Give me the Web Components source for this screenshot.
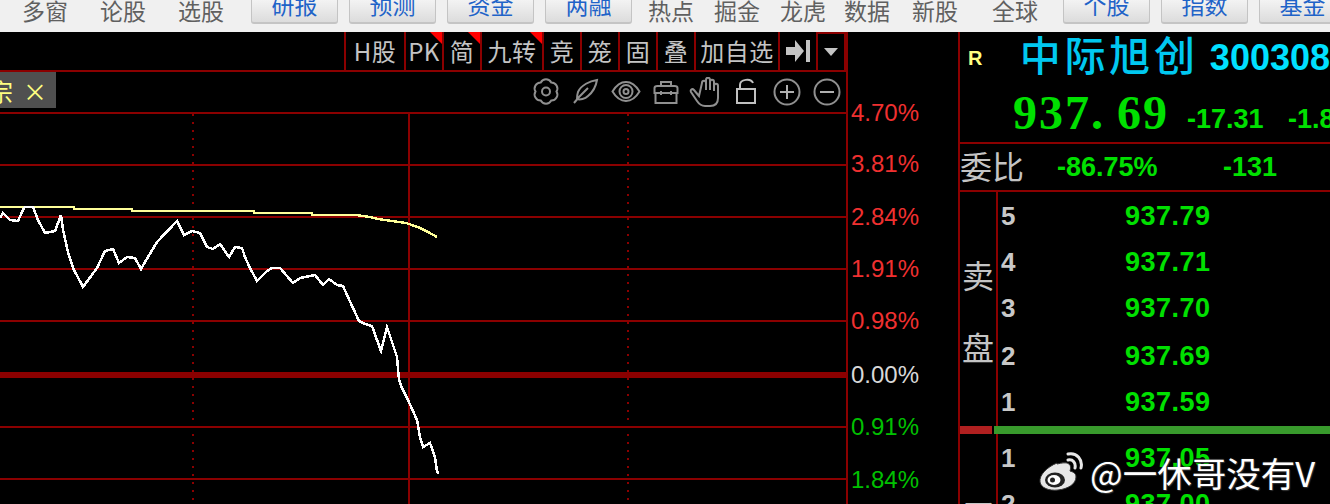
<!DOCTYPE html>
<html><head><meta charset="utf-8">
<style>
html,body{margin:0;padding:0;background:#000;width:1330px;height:504px;overflow:hidden;font-family:"Noto Sans CJK SC","Liberation Sans",sans-serif}
app-shell{width:1330px;height:504px}
</style></head><body>
<app-shell>
  <top-nav slot="nav">
    <nav-link w="78" ml="22">多窗</nav-link><nav-link w="78">论股</nav-link><nav-link w="73">选股</nav-link>
    <nav-btn>研报</nav-btn><nav-btn>预测</nav-btn><nav-btn>资金</nav-btn><nav-btn>两融</nav-btn>
    <nav-link w="66" ml="5">热点</nav-link><nav-link w="66">掘金</nav-link><nav-link w="64">龙虎</nav-link><nav-link w="68">数据</nav-link><nav-link w="80">新股</nav-link><nav-link w="71">全球</nav-link>
    <nav-btn>个股</nav-btn><nav-btn>指数</nav-btn><nav-btn>基金</nav-btn>
  </top-nav>
  <chart-panel slot="chart"></chart-panel>
  <quote-panel slot="quote"></quote-panel>
</app-shell>
<script>
const def=(n,html,init)=>customElements.define(n,class extends HTMLElement{connectedCallback(){if(this.shadowRoot)return;const s=this.attachShadow({mode:'open'});s.innerHTML=html;init&&init.call(this,s)}});
const RED='#8b0000';
def('app-shell',`<style>:host{display:grid;grid-template-columns:958px 372px;grid-template-rows:32px 472px}
::slotted([slot=nav]){grid-column:1/3}</style><slot name="nav"></slot><slot name="chart"></slot><slot name="quote"></slot>`);
def('top-nav',`<style>:host{display:flex;height:32px;background:#f0f0f0;overflow:hidden;align-items:flex-start;gap:0;font:23px/32px "Noto Sans CJK SC",sans-serif}</style><slot></slot>`);
def('nav-link',`<style>:host{display:block;flex:none;color:#606060;font-size:23px;line-height:24px;height:24px;margin-top:-2px;white-space:nowrap}</style><slot></slot>`,function(){this.style.width=this.getAttribute('w')+'px';if(this.getAttribute('ml'))this.style.marginLeft=this.getAttribute('ml')+'px'});
def('nav-btn',`<style>:host{display:block;flex:none;box-sizing:border-box;width:87px;height:25px;margin:-1px 11px 0 0;background:linear-gradient(#f4f4f4,#dcdcdc);border:1px solid #c4c4c4;border-bottom-width:2px;border-top:0;border-radius:0 0 3px 3px;color:#1f63c8;font-size:23px;line-height:24px;text-align:center;overflow:hidden}
div{margin-top:-7px}</style><div><slot></slot></div>`);

def('tool-cell',`<style>:host{position:relative;display:flex;align-items:center;justify-content:center;box-sizing:border-box;height:100%;flex:none;border-left:2px solid ${RED};color:#c4c4c4;font-size:24px;white-space:nowrap;letter-spacing:.5px;line-height:38px}
:host([mark])::after{content:"";position:absolute;right:-1px;top:0;border-top:13px solid #f00;border-left:13px solid transparent}</style><slot></slot>`,function(){this.style.width=this.getAttribute('w')+'px'});

const ico=(w,inner,c)=>`<svg width="${w}" height="30" viewBox="0 0 ${w} 30" fill="none" stroke="${c||'#909090'}" stroke-width="2">${inner}</svg>`;
def('chart-icons',`<style>:host{display:flex;align-items:center;justify-content:flex-end;gap:0;height:40px;margin-right:-1px}svg{display:block;flex:none}</style>
${ico(40,`<path d="M30.500 14.500A6 6 0 0 1 25.250 23.600A6 6 0 0 1 14.750 23.600A6 6 0 0 1 9.500 14.500A6 6 0 0 1 14.750 5.400A6 6 0 0 1 25.250 5.400A6 6 0 0 1 30.500 14.500Z"/><circle cx="20" cy="14.500" r="4"/>`)}
${ico(40,`<path d="M31 3C24 4 15 8 12 15c-1 3-1 5-1 7 3 1 8 0 11-3 5-4 8-10 9-16zM8 26l5-6 9-9"/>`)}
${ico(40,`<path d="M6.500 14.500C11 7 16 5 20 5s9 2 13.500 9.500C29 22 24 24 20 24S11 22 6.500 14.500z"/><circle cx="20" cy="14.500" r="6.500"/><circle cx="20" cy="14.500" r="2.500"/>`)}
${ico(40,`<path d="M8.500 11q0-2 3-2h17q3 0 3 2v5h-23zM9.500 16v10h21V16M15 9V5h10v4M15 14v4M25 14v4"/>`)}
${ico(40,`<path d="M13 19L8 13c-2-2-4 0-3 2l6 9c2 3 4 5 8 5h5c5 0 8-3 8-8V9c0-3-4-3-4 0v5V5c0-3-4-3-4 0v8V3c0-3-4-3-4 0v10V6c0-3-4-3-4 0z"/>`)}
${ico(41,`<path d="M11 12h18v14H11zM14 12V8c0-6 11-7 13-2"/>`,'#c0c0c0')}
${ico(40,`<circle cx="20" cy="15" r="12.500"/><path d="M13 15h14M20 8v14" stroke="#b0b0b0"/>`)}
${ico(40,`<circle cx="20" cy="15" r="12.500"/><path d="M13 15h14" stroke="#b0b0b0"/>`)}`);

const white=[[0,218],[3,213],[10,220],[18,221],[23,210],[25,207],[33,207],[38,220],[45,233],[55,231],[61,215],[63,230],[68,252],[73,268],[83,287],[97,268],[105,251],[113,249],[119,263],[127,257],[135,258],[141,269],[148,257],[157,242],[177,221],[184,235],[192,231],[200,233],[207,247],[213,249],[220,244],[229,257],[235,247],[242,248],[245,257],[250,268],[257,281],[267,271],[272,268],[280,268],[293,283],[300,278],[315,275],[323,285],[329,279],[337,285],[343,286],[347,295],[353,308],[359,321],[365,324],[372,326],[377,340],[381,351],[387,327],[392,342],[397,357],[399,380],[402,388],[408,400],[417,420],[420,437],[423,447],[430,443],[435,457],[437,472],[439,473]].map(p=>p.join(',')).join(' ');
const yellow="0,207 74,207 74,209 132,209 132,211 254,211 254,213 312,213 312,215 356,215 370,217 378,219 392,221 406,223 412,225 420,228 428,232 437,237";
const hl=[164,216,268,320,426,478].map(y=>`<rect x="0" y="${y}" width="848" height="2" fill="${RED}"/>`).join('');
def('chart-plot',`<style>:host{display:block;height:390px;overflow:hidden}svg{display:block}</style>
<svg width="848" height="390" viewBox="0 114 848 390" fill="none" shape-rendering="crispEdges">
${hl}<rect x="0" y="372" width="848" height="6" fill="${RED}"/>
<rect x="408" y="114" width="2" height="390" fill="${RED}"/>
<path d="M193 114V504M628 114V504" stroke="${RED}" stroke-width="2" stroke-dasharray="2 6"/>
<rect x="846" y="114" width="2" height="390" fill="${RED}"/>
<polyline points="${yellow}" stroke="#ffff99" stroke-width="2.500"/>
<polyline points="${white}" stroke="#fff" stroke-width="2.500"/>
</svg>`);
def('axis-label',`<style>:host{display:block;height:52px;line-height:52px;font:24px/52px "Liberation Sans",sans-serif}</style><slot></slot>`);
def('chart-panel',`<style>:host{display:grid;grid-template-columns:848px 110px;grid-template-rows:40px 42px 390px;overflow:hidden}
.tools{grid-column:1;display:flex;justify-content:flex-end;border-bottom:2px solid ${RED};box-sizing:border-box;height:40px;border-right:2px solid ${RED}}
.row2{border-bottom:2px solid ${RED};border-right:2px solid ${RED};box-sizing:border-box;height:42px;display:flex;justify-content:space-between}
.chip{box-sizing:border-box;width:56px;height:36px;background:#505050;color:#ffff80;display:flex;align-items:center;font-size:24px;overflow:hidden;justify-content:flex-end;gap:10px;padding-right:9px;flex:none}
.chip b{font-weight:400;margin-left:-18px}
.axis{grid-column:2;grid-row:1/4;padding:55px 0 0 3px}
.drop{box-sizing:border-box;border:2px solid ${RED};border-bottom:0;width:30px;height:100%;flex:none;display:flex;align-items:center;justify-content:center}
.plot{grid-column:1}
</style>
<div class="tools">
<tool-cell w="60">H股</tool-cell><tool-cell w="38" mark>PK</tool-cell><tool-cell w="38" mark>简</tool-cell><tool-cell w="62" mark>九转</tool-cell><tool-cell w="38">竞</tool-cell><tool-cell w="38">笼</tool-cell><tool-cell w="38">固</tool-cell><tool-cell w="38">叠</tool-cell><tool-cell w="84">加自选</tool-cell>
<tool-cell w="38"><svg width="24" height="22" viewBox="0 0 24 22"><path d="M0 7h9V0l9 11-9 11v-7H0z" fill="#c4c4c4"/><rect x="20" y="0" width="4" height="22" fill="#c4c4c4"/></svg></tool-cell>
<div class="drop"><svg width="14" height="8" viewBox="0 0 14 8"><path d="M0 0h14L7 8z" fill="#c4c4c4"/></svg></div>
</div>
<div class="axis">
<axis-label style="color:#f03030">4.70%</axis-label><axis-label style="color:#f03030;margin-top:-1px">3.81%</axis-label><axis-label style="color:#f03030;margin-top:1px">2.84%</axis-label><axis-label style="color:#f03030">1.91%</axis-label><axis-label style="color:#f03030">0.98%</axis-label><axis-label style="color:#d8d8d8;margin-top:2px">0.00%</axis-label><axis-label style="color:#00c000">0.91%</axis-label><axis-label style="color:#00c000;margin-top:1px">1.84%</axis-label>
</div>
<div class="row2"><div class="chip"><b>宗</b><span>×</span></div><chart-icons></chart-icons></div>
<chart-plot class="plot"></chart-plot>`);

def('book-row',`<style>:host{display:flex;height:46px;align-items:center;font:26px/46px "Liberation Sans",sans-serif}
.n{width:129px;padding-left:5px;box-sizing:border-box;color:#c8c8c8;font-weight:700}
.p{color:#00e000;font-size:27px;font-weight:700;letter-spacing:.5px;font-family:"Liberation Sans",sans-serif}</style><span class="n"><slot name="n"></slot></span><span class="p"><slot name="p"></slot></span>`);
def('wb-mark',`<style>:host{position:absolute;left:78px;top:420px;display:flex;align-items:center;gap:6px;color:#fff;font:400 34.500px/40px "Noto Sans CJK SC",sans-serif;text-shadow:0 0 2px #333,1px 1px 1px #333;white-space:nowrap}svg{display:block;flex:none}</style>
<svg width="46" height="40" viewBox="0 0 46 40"><path d="M19 11C9 15 1 23 2 30c1 6 9 9 18 8 10-1 18-6 18-13 0-4-3-5-6-6 1-3 1-5-1-7-3-2-7-1-12 0z" fill="#e8e8e8" stroke="#333"/><ellipse cx="17" cy="28" rx="10" ry="7.500" fill="#222"/><ellipse cx="16" cy="28" rx="6.500" ry="5" fill="#fff"/><circle cx="14.500" cy="28" r="2.500" fill="#222"/><path d="M30 8c5-1 8 3 7 8M30 2c9-2 15 6 13 14" fill="none" stroke="#e8e8e8" stroke-width="3" stroke-linecap="round"/></svg><span>@一休哥没有V</span>`);
def('quote-panel',`<style>:host{display:block;position:relative;box-sizing:border-box;height:472px;border-left:2px solid ${RED};overflow:hidden;white-space:nowrap}
.head{height:112px;border-bottom:2px solid ${RED};box-sizing:border-box;display:flex;flex-direction:column}
.l1{display:flex;height:57px;align-items:center}
.r{color:#ffff80;font:700 20px "Liberation Sans",sans-serif;width:55px;padding-left:8px;box-sizing:border-box;margin-top:-4px}
.name{color:#00c8f0;font-size:41px;font-weight:500;letter-spacing:3.700px;line-height:57px;width:190px;margin-left:10px;flex:none;margin-top:-14px}
.code{color:#00e0ff;font:700 36px "Liberation Sans",sans-serif;margin-top:-6px}
.l2{display:flex;align-items:center;height:50px;color:#00e000;font:700 27px "Liberation Sans",sans-serif}
.px{font:700 48px "Liberation Serif",serif;letter-spacing:2px;margin-left:53px;width:174px;flex:none;margin-top:-4px}
.px i{font-style:normal;letter-spacing:14px}
.l3{height:48px;display:flex;align-items:center;color:#00e000;font:700 27px "Liberation Sans",sans-serif;border-bottom:2px solid ${RED};box-sizing:border-box}
.wb{color:#c4c4c4;font:400 32px/48px "Noto Sans CJK SC",sans-serif;width:97px;flex:none;margin-top:-4px}
.book{display:grid;grid-template-columns:36px 1fr;height:234px;overflow:hidden}
.list{padding-top:1px}
.side{color:#c4c4c4;font-size:32px;line-height:72px;text-align:center;border-right:2px solid ${RED};height:100%;box-sizing:border-box;padding-top:46px;width:38px}
.div{display:flex;height:8px;gap:2px}
.div i{display:block;height:8px}
.buy{height:auto}
.buy .side{padding-top:64px;line-height:32px}
.shift{margin-top:2px}
</style>
<div class="head"><div class="l1"><span class="r">R</span><span class="name">中际旭创</span><span class="code">300308</span></div>
<div class="l2"><span class="px">937<i>.</i>69</span><span style="width:101px;flex:none;margin-top:10px">-17.31</span><span style="margin-top:10px">-1.80%</span></div></div>
<div class="l3"><span class="wb">委比</span><span style="width:166px;flex:none">-86.75%</span><span>-131</span></div>
<div class="book"><div class="side">卖<br>盘</div><div class="list">
<book-row><span slot="n">5</span><span slot="p">937.79</span></book-row>
<book-row><span slot="n">4</span><span slot="p">937.71</span></book-row>
<book-row><span slot="n">3</span><span slot="p">937.70</span></book-row>
<book-row class="shift"><span slot="n">2</span><span slot="p">937.69</span></book-row>
<book-row><span slot="n">1</span><span slot="p">937.59</span></book-row></div></div>
<div class="div"><i style="width:32px;background:#b02020"></i><i style="flex:1;background:#389a2c"></i></div>
<div class="book buy"><div class="side">买</div><div class="list">
<book-row><span slot="n">1</span><span slot="p">937.05</span></book-row>
<book-row><span slot="n">2</span><span slot="p">937.00</span></book-row></div></div>
<wb-mark></wb-mark>`);
</script>
</body></html>
